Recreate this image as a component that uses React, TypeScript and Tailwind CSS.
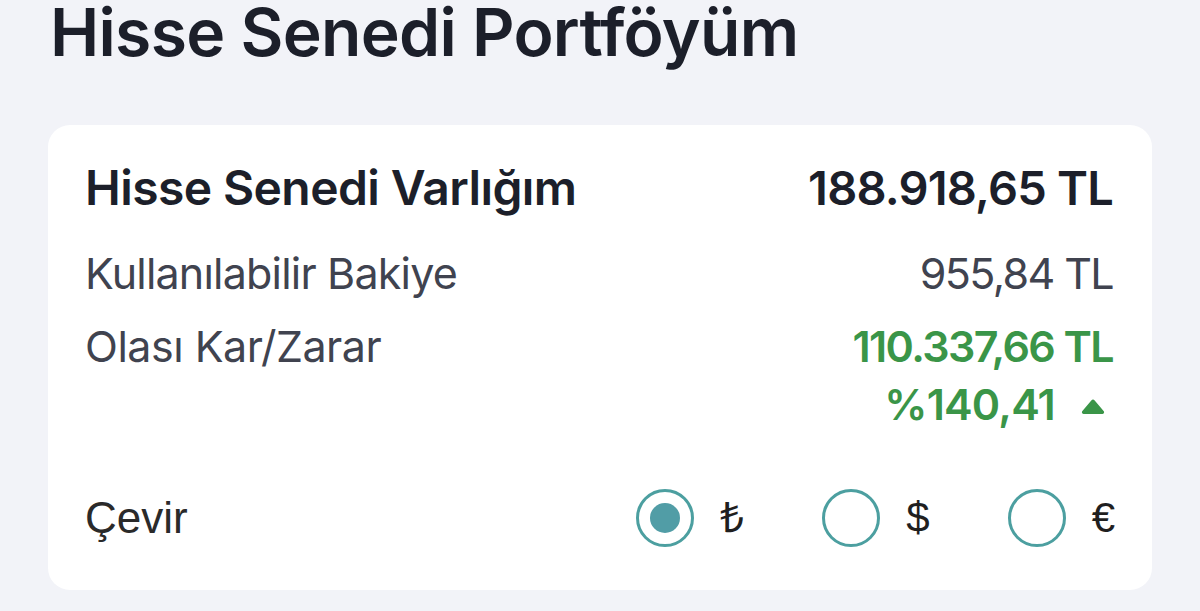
import { useState } from 'react';

const currencies = [
  { key: 'try', symbol: '₺' },
  { key: 'usd', symbol: '$' },
  { key: 'eur', symbol: '€' },
];

export default function App() {
  const [selected, setSelected] = useState('try');

  return (
    <div className="min-h-screen w-full bg-[#f2f3f8] pl-[50px] pr-[48px] font-['Inter',sans-serif]">
      <h1 className="h-[69px] pt-[1px] text-[66px] leading-[62px] font-semibold tracking-[-0.7px] text-[#1c1f2a]">
        Hisse Senedi Portföyüm
      </h1>

      <div className="ml-[-2px] mt-[56px] rounded-[22px] bg-white pl-[37px] pr-[37px] pt-[39px] pb-[43px]">
        {/* Summary */}
        <div className="mr-[2px] flex h-[48px] items-center justify-between text-[#1c1f2a]">
          <span className="text-[48px] leading-[48px] font-semibold tracking-[-0.6px]">Hisse Senedi Varlığım</span>
          <span className="text-[47px] leading-[48px] font-semibold tracking-[-0.8px]">188.918,65 TL</span>
        </div>

        <div className="mr-[2px] mt-[38px] flex h-[46px] items-center justify-between text-[43px] leading-[46px] text-[#40434f]">
          <span className="tracking-[-0.8px]">Kullanılabilir Bakiye</span>
          <span className="tracking-[-1.6px]">955,84 TL</span>
        </div>

        <div className="mr-[2px] mt-[27px] flex items-start justify-between">
          <span className="h-[46px] text-[43px] leading-[46px] tracking-[-0.5px] text-[#40434f]">Olası Kar/Zarar</span>
          <div className="flex flex-col items-end text-[43px] leading-[46px] font-semibold text-[#3a9548]">
            <span className="tracking-[-1.6px]">110.337,66 TL</span>
            <div className="mt-[12px] flex items-center gap-[26px] pr-[8px]">
              <span className="tracking-[-0.8px]">%140,41</span>
              <svg width="24" height="15" viewBox="0 0 24 15" className="mt-[4px]">
                <path d="M10.3 1.6 a2.2 2.2 0 0 1 3.4 0 L22.6 12 A1.8 1.8 0 0 1 21.2 15 H2.8 A1.8 1.8 0 0 1 1.4 12 Z" fill="#3a9548" />
              </svg>
            </div>
          </div>
        </div>

        {/* Currency switch */}
        <div className="mt-[62px] flex h-[58px] items-center justify-between font-['Liberation_Sans',Arial,sans-serif] text-[#1f1f1f]">
          <span className="text-[44px] leading-[58px] text-[#2a2a2a]">Çevir</span>
          <div className="flex items-center gap-[78px]">
            {currencies.map((c) => (
              <button
                key={c.key}
                onClick={() => setSelected(c.key)}
                className="flex items-center gap-[26px]"
              >
                <span className="flex h-[58px] w-[58px] items-center justify-center rounded-full border-[3px] border-[#4c9fa0]">
                  {selected === c.key && <span className="h-[30px] w-[30px] rounded-full bg-[#519da6]" />}
                </span>
                <span className="text-[42px] leading-[58px]">{c.symbol}</span>
              </button>
            ))}
          </div>
        </div>
      </div>
    </div>
  );
}
